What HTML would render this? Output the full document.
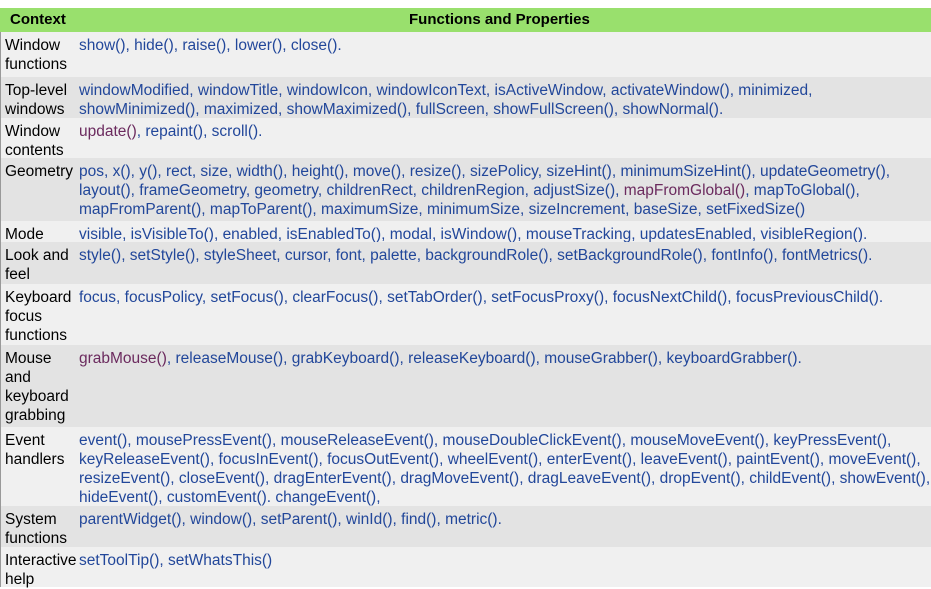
<!DOCTYPE html><html><head><style>
body{margin:0;width:931px;height:587px;overflow:hidden;background:#fff;font-family:"Liberation Sans",Arial,sans-serif;font-size:15.5px;}
.h{position:absolute;left:0;top:8px;width:931px;height:24px;background:#99e06d;font-weight:bold;line-height:24px;color:#000;font-size:15px}
.r{position:absolute;left:0;width:931px;line-height:19px;color:#000;border-left:1px solid #999;box-sizing:border-box}
.a{background:#f0f0f0}.b{background:#e3e3e3}
.l{position:absolute;left:4px;top:4px;width:74px}
.c{position:absolute;left:78px;top:4px;width:853px;color:#22479a;white-space:nowrap}
.v{color:#6b2a5e}
</style></head><body>
<div class="h"><span style="position:absolute;left:10px">Context</span><span style="position:absolute;left:409px">Functions and Properties</span></div>
<div class="r a" style="top:32px;height:45px"><div class="l">Window functions</div><div class="c">show(), hide(), raise(), lower(), close().</div></div>
<div class="r b" style="top:77px;height:41px"><div class="l">Top-level windows</div><div class="c">windowModified, windowTitle, windowIcon, windowIconText, isActiveWindow, activateWindow(), minimized,<br>showMinimized(), maximized, showMaximized(), fullScreen, showFullScreen(), showNormal().</div></div>
<div class="r a" style="top:118px;height:40px"><div class="l">Window contents</div><div class="c"><span class="v">update()</span>, repaint(), scroll().</div></div>
<div class="r b" style="top:158px;height:63px"><div class="l">Geometry</div><div class="c">pos, x(), y(), rect, size, width(), height(), move(), resize(), sizePolicy, sizeHint(), minimumSizeHint(), updateGeometry(),<br>layout(), frameGeometry, geometry, childrenRect, childrenRegion, adjustSize(), <span class="v">mapFromGlobal()</span>, mapToGlobal(),<br>mapFromParent(), mapToParent(), maximumSize, minimumSize, sizeIncrement, baseSize, setFixedSize()</div></div>
<div class="r a" style="top:221px;height:21px"><div class="l">Mode</div><div class="c">visible, isVisibleTo(), enabled, isEnabledTo(), modal, isWindow(), mouseTracking, updatesEnabled, visibleRegion().</div></div>
<div class="r b" style="top:242px;height:42px"><div class="l">Look and feel</div><div class="c">style(), setStyle(), styleSheet, cursor, font, palette, backgroundRole(), setBackgroundRole(), fontInfo(), fontMetrics().</div></div>
<div class="r a" style="top:284px;height:61px"><div class="l">Keyboard focus functions</div><div class="c">focus, focusPolicy, setFocus(), clearFocus(), setTabOrder(), setFocusProxy(), focusNextChild(), focusPreviousChild().</div></div>
<div class="r b" style="top:345px;height:82px"><div class="l">Mouse and keyboard grabbing</div><div class="c"><span class="v">grabMouse()</span>, releaseMouse(), grabKeyboard(), releaseKeyboard(), mouseGrabber(), keyboardGrabber().</div></div>
<div class="r a" style="top:427px;height:79px"><div class="l">Event handlers</div><div class="c">event(), mousePressEvent(), mouseReleaseEvent(), mouseDoubleClickEvent(), mouseMoveEvent(), keyPressEvent(),<br>keyReleaseEvent(), focusInEvent(), focusOutEvent(), wheelEvent(), enterEvent(), leaveEvent(), paintEvent(), moveEvent(),<br>resizeEvent(), closeEvent(), dragEnterEvent(), dragMoveEvent(), dragLeaveEvent(), dropEvent(), childEvent(), showEvent(),<br>hideEvent(), customEvent(). changeEvent(),</div></div>
<div class="r b" style="top:506px;height:41px"><div class="l">System functions</div><div class="c">parentWidget(), window(), setParent(), winId(), find(), metric().</div></div>
<div class="r a" style="top:547px;height:40px"><div class="l">Interactive help</div><div class="c">setToolTip(), setWhatsThis()</div></div>
</body></html>
